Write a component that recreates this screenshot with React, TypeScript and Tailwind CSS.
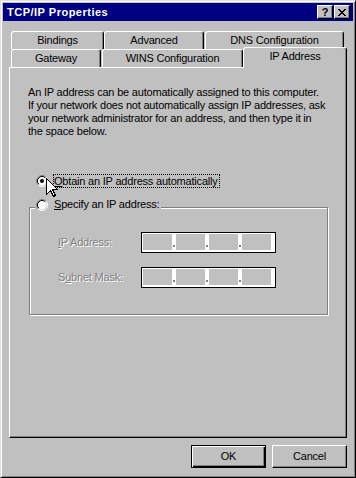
import React from 'react';

// classic 12x12 radio button
const Radio = ({ checked }: { checked?: boolean }) => (
  <svg width="12" height="12" viewBox="0 0 12 12" className="block shrink-0">
    <circle cx="6" cy="6" r="4.5" fill="#ffffff" />
    <path d="M2.11 9.89 A5.5 5.5 0 0 1 9.89 2.11" fill="none" stroke="#808080" />
    <path d="M9.89 2.11 A5.5 5.5 0 0 1 2.11 9.89" fill="none" stroke="#ffffff" />
    <path d="M2.82 9.18 A4.5 4.5 0 0 1 9.18 2.82" fill="none" stroke="#000000" />
    <path d="M9.18 2.82 A4.5 4.5 0 0 1 2.82 9.18" fill="none" stroke="#dfdfdf" />
    {checked && <circle cx="6" cy="6" r="2" fill="#000000" />}
  </svg>
);

const CloseGlyph = () => {
  const rows = ['11000011', '01100110', '00111100', '00011000', '00111100', '01100110', '11000011'];
  return (
    <svg width="8" height="7" viewBox="0 0 8 7" shapeRendering="crispEdges" className="block">
      {rows.map((r, y) =>
        r.split('').map((c, x) => (c === '1' ? <rect key={`${x}-${y}`} x={x} y={y} width="1" height="1" fill="#000" /> : null))
      )}
    </svg>
  );
};

const Cursor = () => (
  <svg width="13" height="20" viewBox="0 0 13 20" className="block" shapeRendering="crispEdges">
    <path d="M0.5 0.5 L0.5 16.5 L4.5 12.5 L7.5 18.5 L9.5 17.5 L6.5 11.5 L11.5 11.5 Z" fill="#ffffff" stroke="#000000" strokeWidth="1" />
  </svg>
);

const IpField = () => (
  <div className="flex items-start w-[135px] h-[21px] border border-black bg-white pt-[1px] pl-[1px]">
    {[0, 1, 2, 3].map((i) => (
      <React.Fragment key={i}>
        {i > 0 && (
          <div className="w-[4px] h-[16px] flex items-end justify-center pb-[3px]">
            <div className="w-[2px] h-[2px] bg-[#808080]" />
          </div>
        )}
        <div className="w-[29px] h-[16px] bg-[#c0c0c0]" />
      </React.Fragment>
    ))}
  </div>
);

const tabBase =
  'flex items-center justify-center border-l border-t border-r border-l-white border-t-white border-r-black rounded-t-[3px] shadow-[inset_-1px_0_0_#808080] bg-[#c0c0c0]';

const disabled = 'text-[#808080] [text-shadow:1px_1px_0_#ffffff]';

export default function App() {
  return (
    <div className="w-[356px] h-[478px] bg-[#c0c0c0] border border-t-[#dfdfdf] border-l-[#dfdfdf] border-r-black border-b-black shadow-[inset_1px_1px_0_#ffffff,inset_-1px_-1px_0_#808080] p-[2px] flex flex-col font-['Liberation_Sans',Arial,sans-serif] text-[11px] leading-[13px] tracking-[-0.2px] text-black">
      {/* title bar */}
      <div className="h-[18px] bg-[#000080] flex items-center pl-[4px] pr-[3px]">
        <span className="font-bold text-white text-[11px] tracking-[0.5px]">TCP/IP Properties</span>
        <div className="ml-auto flex gap-[1px]">
          <div className="w-[16px] h-[14px] bg-[#c0c0c0] border border-t-white border-l-white border-r-black border-b-black shadow-[inset_-1px_-1px_0_#808080] flex items-center justify-center font-bold text-[11px] leading-none tracking-normal">
            ?
          </div>
          <div className="w-[16px] h-[14px] bg-[#c0c0c0] border border-t-white border-l-white border-r-black border-b-black shadow-[inset_-1px_-1px_0_#808080] flex items-center justify-center">
            <CloseGlyph />
          </div>
        </div>
      </div>

      <div className="pl-[6px] pt-[10px] flex flex-col">
        {/* tabs */}
        <div className="ml-[2px] flex h-[18px]">
          <div className={`${tabBase} w-[93px] h-[18px]`}>Bindings</div>
          <div className={`${tabBase} w-[100px] h-[18px]`}>Advanced</div>
          <div className={`${tabBase} w-[139px] h-[18px] ml-[1px]`}>DNS Configuration</div>
        </div>
        <div className="ml-[2px] flex items-end h-[18px]">
          <div className={`${tabBase} w-[90px] h-[18px]`}>Gateway</div>
          <div className={`${tabBase} w-[141px] h-[18px] ml-[1px]`}>WINS Configuration</div>
          <div className={`${tabBase} w-[104px] h-[21px] -mb-[1px] relative z-10 pb-[3px]`}>IP Address</div>
        </div>

        {/* tab page */}
        <div className="w-[338px] h-[371px] border border-t-white border-l-white border-r-black border-b-black shadow-[inset_-1px_-1px_0_#808080] flex flex-col">
          <div className="pl-[18px] pt-[18px] whitespace-nowrap">
            <p>An IP address can be automatically assigned to this computer.</p>
            <p>If your network does not automatically assign IP addresses, ask</p>
            <p>your network administrator for an address, and then type it in</p>
            <p>the space below.</p>
          </div>

          {/* obtain */}
          <div className="mt-[36px] ml-[26px] flex items-center h-[14px]">
            <div className="relative">
              <Radio checked />
              <div className="absolute left-[10px] top-[3px] z-20">
                <Cursor />
              </div>
            </div>
            <span className="ml-[5px] border border-dotted border-black pr-[1px] leading-[12px]">
              <span className="underline">O</span>btain an IP address automatically
            </span>
          </div>

          {/* specify (group caption) */}
          <div className="mt-[10px] ml-[25px] relative z-10 w-fit bg-[#c0c0c0] pl-[1px] pr-[2px] flex items-center h-[13px]">
            <Radio />
            <span className="ml-[6px]">
              <span className="underline">S</span>pecify an IP address:
            </span>
          </div>

          <div className="-mt-[4px] ml-[19px] w-[299px] border border-[#808080] shadow-[inset_1px_1px_0_#ffffff,1px_1px_0_#ffffff] pt-[24px] pl-[28px] pb-[26px]">
            <div className="grid grid-cols-[83px_135px] gap-y-[14px] items-center">
              <span className={disabled}>
                <span className="underline">I</span>P Address:
              </span>
              <IpField />
              <span className={disabled}>
                S<span className="underline">u</span>bnet Mask:
              </span>
              <IpField />
            </div>
          </div>
        </div>

        {/* buttons */}
        <div className="w-[338px] mt-[7px] flex justify-end gap-[6px]">
          <button className="w-[75px] h-[23px] bg-[#c0c0c0] border border-black shadow-[inset_1px_1px_0_#ffffff,inset_-1px_-1px_0_#000000,inset_-2px_-2px_0_#808080] text-[11px]">
            OK
          </button>
          <button className="w-[75px] h-[23px] bg-[#c0c0c0] border border-t-white border-l-white border-r-black border-b-black shadow-[inset_-1px_-1px_0_#808080] text-[11px]">
            Cancel
          </button>
        </div>
      </div>
    </div>
  );
}
